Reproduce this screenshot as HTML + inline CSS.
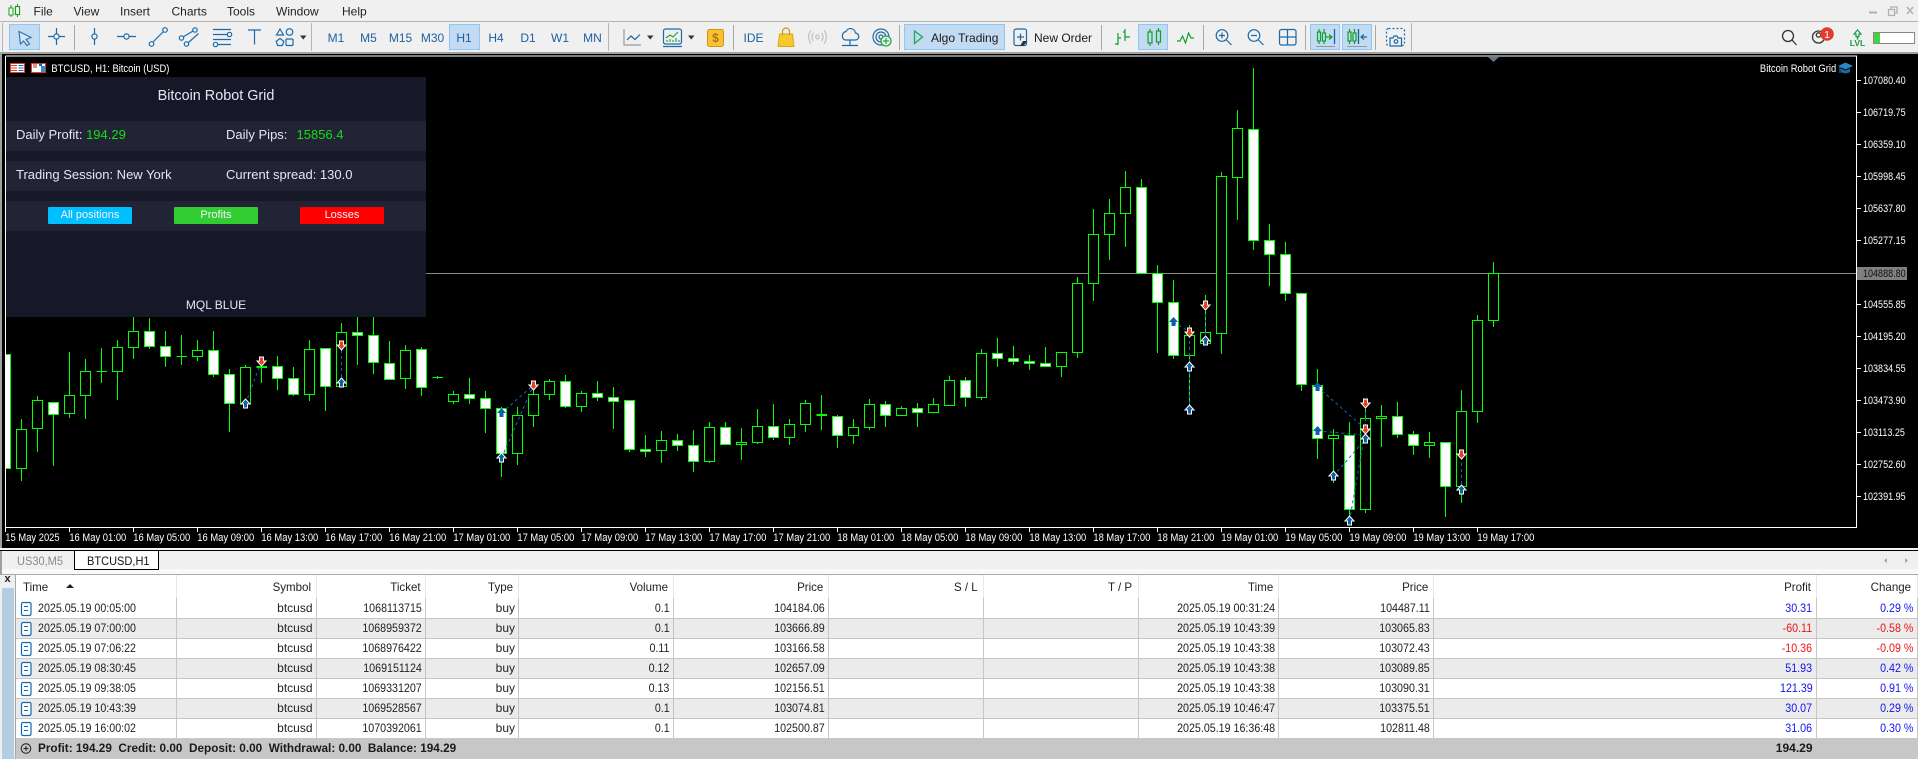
<!DOCTYPE html>
<html><head><meta charset="utf-8"><title>MT5</title>
<style>
html,body{margin:0;padding:0;background:#f0f0f0}
body{position:relative;width:1918px;height:759px;overflow:hidden;font-family:"Liberation Sans",sans-serif;color:#222}
svg{position:absolute;left:0;top:0;font-family:"Liberation Sans",sans-serif}
.abs{position:absolute}
.p{position:absolute;white-space:nowrap;color:#e4e6f4;font-size:13px;line-height:16px}
.btn{position:absolute;top:207px;width:84px;height:17px;border-radius:1px;color:#f4f4ff;font-size:11px;line-height:17px;text-align:center}
.row{position:absolute;left:16px;width:1902px;height:20px}
.row.alt{background:#ebebeb}
.row.wh{background:#fff}
.row i,.hd i{position:absolute;top:0;font-style:normal;font-size:12px;line-height:20px;white-space:nowrap;color:#222;transform:scaleX(.89);transform-origin:100% 50%}
.row i.a{left:22px;transform-origin:0 50%}
.row i.b{right:1605.5px;transform:none}
.row i.c{right:1496.5px}
.row i.d{right:1403px;transform:none}
.row i.e{right:1248.5px}
.row i.f{right:1093px}
.row i.g{right:643px}
.row i.h{right:488.5px}
.row i.j{right:105.5px}
.row i.k{right:5px}
.pos{color:#1414f0!important}
.neg{color:#f01414!important}
.hd i{transform:scaleX(.96);top:2px}
</style></head>
<body>

<!-- Chart area -->
<div class="abs" style="left:0;top:52px;width:1918px;height:3px;background:#a0a0a0"></div>
<div class="abs" style="left:2px;top:54px;width:1916px;height:494px;background:#000"></div>
<div class="abs" style="left:0;top:54px;width:2px;height:494px;background:#a0a0a0"></div>
<div class="abs" style="left:0;top:548px;width:1918px;height:2px;background:#f4f4f4"></div>
<div class="abs" style="left:0;top:550px;width:1918px;height:1px;background:#000"></div>

<svg width="1918" height="759" viewBox="0 0 1918 759">
<defs>
<path id="u" d="M0-5 4.500 0H2V4H-2V0H-4.500Z" fill="#0f5ea8" stroke="#fff"/>
<path id="v" d="M0-5 4.500 0H2V4H-2V0H-4.500Z" fill="#0f5ea8"/>
<path id="d" d="M0 5 4.500 0H2V-4H-2V0H-4.500Z" fill="#e8401c" stroke="#fff"/>
</defs>
<path d="M426 273.5H1857" stroke="#8a8a8a" fill="none"/>
<!-- wicks -->
<path fill="none" stroke="#00ff00" d="M21.5 419V481M37.5 396V452M53.5 402V466M69.5 352V418M85.5 359V419M101.5 348V383M117.5 340V400M133.5 317V359M149.5 318V349M165.5 331V367M181.5 335V365M197.5 340V361M213.5 331V377M229.5 369V432M245.5 365V404M261.5 360V383M277.5 356V390M293.5 367V396M309.5 340V401M325.5 348V411M341.5 323V387M357.5 317V365M373.5 317V374M389.5 341V379M405.5 345V389M421.5 347V396M437.5 376V379M453.5 391V404M469.5 378V404M485.5 391V433M501.5 407V477M517.5 407V465M533.5 390V427M549.5 379V400M565.5 375V408M581.5 391V412M597.5 381V401M613.5 387V429M629.5 400V452M645.5 435V457M661.5 431V463M677.5 434V451M693.5 430V472M709.5 422V463M725.5 422V445M741.5 428V460M757.5 409V444M773.5 404V440M789.5 419V445M805.5 400V432M821.5 395V430M837.5 415V448M853.5 419V444M869.5 399V430M885.5 401V427M901.5 406V416M917.5 403V427M933.5 398V413M949.5 376V405M965.5 377V407M981.5 349V400M997.5 338V367M1013.5 346V365M1029.5 355V370M1045.5 347V367M1061.5 352V377M1077.5 277V358M1093.5 209V301M1109.5 199V260M1125.5 171V247M1141.5 179V273M1157.5 265V353M1173.5 280V359M1189.5 325V413M1205.5 295V343M1221.5 172V354M1237.5 110V220M1253.5 68V250M1269.5 224V286M1285.5 242V301M1301.5 293V391M1317.5 369V459M1333.5 429V483M1349.5 422V518M1365.5 408V513M1381.5 405V447M1397.5 402V438M1413.5 431V455M1429.5 432V458M1445.5 442V517M1461.5 390V503M1477.5 315V423M1493.5 262V327"/>
<!-- doji -->
<path fill="none" stroke="#00ff00" d="M96.5 371.5H107M176.5 356.5H187M432.5 377.5H443"/>
<path fill="none" stroke="#00ff00" stroke-width="2" d="M256.5 367H267M816.5 415H827"/>
<!-- hollow bodies -->
<path fill="#000" stroke="#00ff00" d="M16.5 429.5h10v39h-10zM32.5 400.5h10v28h-10zM64.5 395.5h10v18h-10zM80.5 371.5h10v24h-10zM112.5 347.5h10v24h-10zM128.5 331.5h10v16h-10zM192.5 350.5h10v6h-10zM240.5 367.5h10v36h-10zM304.5 349.5h10v45h-10zM336.5 332.5h10v54h-10zM400.5 350.5h10v28h-10zM448.5 394.5h10v7h-10zM512.5 415.5h10v38h-10zM528.5 394.5h10v21h-10zM544.5 381.5h10v13h-10zM576.5 393.5h10v13h-10zM656.5 440.5h10v10h-10zM704.5 427.5h10v34h-10zM736.5 442.5h10v2h-10zM752.5 426.5h10v16h-10zM784.5 424.5h10v13h-10zM800.5 403.5h10v21h-10zM848.5 427.5h10v8h-10zM864.5 404.5h10v23h-10zM896.5 408.5h10v7h-10zM928.5 404.5h10v8h-10zM944.5 380.5h10v25h-10zM976.5 353.5h10v44h-10zM1056.5 352.5h10v14h-10zM1072.5 283.5h10v69h-10zM1088.5 234.5h10v49h-10zM1104.5 213.5h10v21h-10zM1120.5 187.5h10v26h-10zM1184.5 335.5h10v20h-10zM1200.5 332.5h10v11h-10zM1216.5 176.5h10v157h-10zM1232.5 128.5h10v49h-10zM1328.5 435.5h10v3h-10zM1360.5 418.5h10v91h-10zM1376.5 416.5h10v2h-10zM1424.5 442.5h10v3h-10zM1456.5 411.5h10v75h-10zM1472.5 320.5h10v91h-10zM1488.5 273.5h10v47h-10z"/>
<!-- white bodies -->
<path fill="#fff" stroke="#00ff00" d="M3 354.5H10.5V468.5H3zM48.5 402.5h10v12h-10zM144.5 331.5h10v15h-10zM160.5 346.5h10v10h-10zM208.5 350.5h10v24h-10zM224.5 374.5h10v29h-10zM272.5 366.5h10v12h-10zM288.5 378.5h10v16h-10zM320.5 348.5h10v38h-10zM352.5 332.5h10v3h-10zM368.5 335.5h10v27h-10zM384.5 363.5h10v16h-10zM416.5 349.5h10v38h-10zM464.5 394.5h10v4h-10zM480.5 398.5h10v10h-10zM496.5 408.5h10v45h-10zM560.5 381.5h10v25h-10zM592.5 393.5h10v4h-10zM608.5 397.5h10v4h-10zM624.5 400.5h10v49h-10zM640.5 449.5h10v2h-10zM672.5 440.5h10v5h-10zM688.5 445.5h10v16h-10zM720.5 427.5h10v17h-10zM768.5 426.5h10v11h-10zM832.5 416.5h10v19h-10zM880.5 404.5h10v11h-10zM912.5 408.5h10v4h-10zM960.5 380.5h10v17h-10zM992.5 353.5h10v5h-10zM1008.5 358.5h10v3h-10zM1024.5 361.5h10v2h-10zM1040.5 363.5h10v3h-10zM1136.5 187.5h10v86h-10zM1152.5 273.5h10v29h-10zM1168.5 302.5h10v53h-10zM1248.5 129.5h10v111h-10zM1264.5 240.5h10v14h-10zM1280.5 254.5h10v39h-10zM1296.5 293.5h10v91h-10zM1312.5 385.5h10v53h-10zM1344.5 435.5h10v74h-10zM1392.5 416.5h10v18h-10zM1408.5 434.5h10v11h-10zM1440.5 442.5h10v44h-10z"/>
<!-- trade lines -->
<path fill="none" stroke="#1168b4" stroke-dasharray="3 3" d="M245.5 404L261.5 361M341.5 383V345M501.5 458L533.5 385M501.5 413L533.5 385M1173.5 322L1189.5 332M1189.5 410V332M1205.5 341V305M1317.5 387L1365.5 429M1317.5 431L1365.5 435M1333.5 476L1365.5 439M1349.5 521L1365.5 429M1365.5 439V403M1461.5 490V454"/>
<!-- arrows -->
<use href="#u" x="245.5" y="404"/><use href="#d" x="261.5" y="361"/>
<use href="#u" x="341.5" y="383"/><use href="#d" x="341.5" y="345"/>
<use href="#u" x="501.5" y="458"/><use href="#v" x="501.5" y="413"/><use href="#d" x="533.5" y="385"/>
<use href="#v" x="1173.5" y="322"/><use href="#d" x="1189.5" y="332"/><use href="#u" x="1189.5" y="367"/><use href="#u" x="1189.5" y="410"/>
<use href="#d" x="1205.5" y="305"/><use href="#u" x="1205.5" y="341"/>
<use href="#v" x="1317.5" y="387"/><use href="#v" x="1317.5" y="431"/><use href="#u" x="1333.5" y="476"/><use href="#u" x="1349.5" y="521"/>
<use href="#d" x="1365.5" y="403"/><use href="#d" x="1365.5" y="429"/><use href="#u" x="1365.5" y="439"/>
<use href="#d" x="1461.5" y="454"/><use href="#u" x="1461.5" y="490"/>
<!-- frame -->
<rect x="2" y="340" width="3" height="140" fill="#000"/>
<path d="M5.5 56V527.5H1856.5V56H5.5" fill="none" stroke="#fff"/>
<path d="M1488 57h11l-5.5 5z" fill="#66758a"/>
<!-- time ticks -->
<path stroke="#fff" fill="none" d="M5.5 528V532M69.5 528V532M133.5 528V532M197.5 528V532M261.5 528V532M325.5 528V532M389.5 528V532M453.5 528V532M517.5 528V532M581.5 528V532M645.5 528V532M709.5 528V532M773.5 528V532M837.5 528V532M901.5 528V532M965.5 528V532M1029.5 528V532M1093.5 528V532M1157.5 528V532M1221.5 528V532M1285.5 528V532M1349.5 528V532M1413.5 528V532M1477.5 528V532"/>
<!-- price ticks -->
<path stroke="#fff" fill="none" d="M1857 80.5H1861M1857 112.5H1861M1857 144.5H1861M1857 176.5H1861M1857 208.5H1861M1857 240.5H1861M1857 304.5H1861M1857 336.5H1861M1857 368.5H1861M1857 400.5H1861M1857 432.5H1861M1857 464.5H1861M1857 496.5H1861"/>
<rect x="1857" y="267" width="50" height="13" fill="#808080"/>
<g font-size="11" fill="#fff" transform="scale(.82,1)">
<text x="2272" y="84">107080.40</text><text x="2272" y="116">106719.75</text><text x="2272" y="148">106359.10</text><text x="2272" y="180">105998.45</text><text x="2272" y="212">105637.80</text><text x="2272" y="244">105277.15</text>
<text x="2272" y="277" fill="#111">104888.80</text>
<text x="2272" y="308">104555.85</text><text x="2272" y="340">104195.20</text><text x="2272" y="372">103834.55</text><text x="2272" y="404">103473.90</text><text x="2272" y="436">103113.25</text><text x="2272" y="468">102752.60</text><text x="2272" y="500">102391.95</text>
</g>
<g font-size="11" fill="#fff" transform="scale(.856,1)">
<text x="6.2" y="541">15 May 2025</text><text x="81" y="541">16 May 01:00</text><text x="155.7" y="541">16 May 05:00</text><text x="230.5" y="541">16 May 09:00</text><text x="305.3" y="541">16 May 13:00</text><text x="380" y="541">16 May 17:00</text><text x="454.8" y="541">16 May 21:00</text><text x="529.6" y="541">17 May 01:00</text><text x="604.4" y="541">17 May 05:00</text><text x="679.1" y="541">17 May 09:00</text><text x="753.9" y="541">17 May 13:00</text><text x="828.7" y="541">17 May 17:00</text><text x="903.4" y="541">17 May 21:00</text><text x="978.2" y="541">18 May 01:00</text><text x="1053" y="541">18 May 05:00</text><text x="1127.8" y="541">18 May 09:00</text><text x="1202.5" y="541">18 May 13:00</text><text x="1277.3" y="541">18 May 17:00</text><text x="1352.1" y="541">18 May 21:00</text><text x="1426.8" y="541">19 May 01:00</text><text x="1501.6" y="541">19 May 05:00</text><text x="1576.4" y="541">19 May 09:00</text><text x="1651.1" y="541">19 May 13:00</text><text x="1725.9" y="541">19 May 17:00</text>
<text x="60" y="72">BTCUSD, H1:  Bitcoin (USD)</text>
<text x="2056" y="72">Bitcoin Robot Grid</text>
</g>
<!-- chart header icons -->
<rect x="10.5" y="63.5" width="14" height="9" fill="#fff" stroke="#e23b2e"/>
<path d="M11 65.5h6M11 68h6M11 70.5h6" stroke="#e23b2e"/><path d="M18.5 65.5h5M18.5 68h5M18.5 70.5h5" stroke="#1168b4"/>
<rect x="31.5" y="63.5" width="14" height="9" fill="#fff" stroke="#e23b2e"/>
<path d="M33 64h4v4h-4z" fill="#f28a80"/><path d="M39 63h3v3h-3z" fill="#1168b4"/><path d="M41 66h4v6h-4z" fill="#2f8fd4"/>
<!-- grad cap -->
<path d="M1838 66l7.5-3.5L1853 66l-7.5 3.5z" fill="#2a86c8"/><path d="M1841 68.5v3.5c3 1.8 6 1.8 9 0v-3.5l-4.500 2z" fill="#1a6aa8"/><path d="M1840 67v6" stroke="#2a86c8"/>
</svg>

<!-- Panel -->
<div class="abs" style="left:6px;top:77px;width:420px;height:240px;background:#161827"></div>
<div class="abs" style="left:6px;top:121px;width:420px;height:30px;background:#222436"></div>
<div class="abs" style="left:6px;top:161px;width:420px;height:30px;background:#222436"></div>
<div class="abs" style="left:6px;top:201px;width:420px;height:30px;background:#222436"></div>
<div class="p" style="left:6px;width:420px;top:87px;text-align:center;font-size:14.4px;line-height:18px">Bitcoin Robot Grid</div>
<div class="p" style="left:16px;top:127px">Daily Profit: <span style="color:#11e011">194.29</span></div>
<div class="p" style="left:226px;top:127px">Daily Pips:<span style="position:absolute;left:70.5px;color:#11e011">15856.4</span></div>
<div class="p" style="left:16px;top:167px">Trading Session: New York</div>
<div class="p" style="left:226px;top:167px">Current spread: 130.0</div>
<div class="btn" style="left:48px;background:#00bfff">All positions</div>
<div class="btn" style="left:174px;background:#32cd32">Profits</div>
<div class="btn" style="left:300px;background:#ff0000">Losses</div>
<div class="p" style="left:6px;width:420px;top:297px;text-align:center;font-size:12px">MQL BLUE</div>

<!-- Toolbar -->
<svg width="1918" height="54" viewBox="0 0 1918 54" style="height:54px">
<rect width="1918" height="52" fill="#f0f0f0"/>
<path d="M0 21.500H1918" stroke="#b4b4b4"/>
<!-- app icon -->
<path d="M11 5v12M17.500 4v13" stroke="#1aa01a"/><rect x="9" y="8" width="4" height="7" fill="#fff" stroke="#1aa01a"/><rect x="15.500" y="6.500" width="4" height="8" fill="#fff" stroke="#1aa01a" stroke-width="1.200"/>
<g font-size="12" fill="#222">
<text x="33.500" y="15.500">File</text><text x="73.500" y="15.500">View</text><text x="120" y="15.500">Insert</text><text x="171.500" y="15.500">Charts</text><text x="227" y="15.500">Tools</text><text x="276" y="15.500">Window</text><text x="342" y="15.500">Help</text>
</g>
<!-- window controls -->
<path d="M1869 12.500h8" stroke="#b0b0b0" stroke-width="2"/><path d="M1888.500 9.500h6v6h-6zM1891 9V7h6v6h-2" fill="none" stroke="#b0b0b0" stroke-width="1.300"/><path d="M1907 7l6 7M1913 7l-6 7" stroke="#b0b0b0" stroke-width="1.500"/>
<!-- selected -->
<g fill="#c2dbf2" stroke="#90c6f4">
<rect x="9.500" y="24.500" width="30" height="25"/><rect x="449.500" y="24.500" width="30" height="25"/><rect x="904.500" y="24.500" width="100" height="25"/><rect x="1138.500" y="24.500" width="29" height="25"/><rect x="1310.500" y="24.500" width="29" height="25"/><rect x="1342.500" y="24.500" width="29" height="25"/>
</g>
<!-- separators -->
<path stroke="#a8a8a8" d="M74.500 25V50M733.500 25V50M899.500 25V50M1101.500 25V50M1203.500 25V50M1305.500 25V50M1375.500 25V50"/>
<path stroke="#b4b4b4" d="M2.500 23V51M311.500 23V51M608.500 23V51M1411.500 23V51"/>
<g fill="none" stroke="#1c6aa8" stroke-width="1.200">
<!-- cursor -->
<path d="M19 31.500L31 37.500 26 39.500 29.500 44 27 45.500 23.500 41 20.500 44z" stroke="#2a7ab8" fill="#d8e8f6"/>
<!-- cross -->
<path d="M48 36.500h17M56.500 28v17"/><circle cx="56.500" cy="36.500" r="2.600" fill="#f0f0f0"/>
<!-- vline -->
<path d="M94.500 28v17"/><circle cx="94.500" cy="36.500" r="2.600" fill="#f0f0f0"/>
<!-- hline -->
<path d="M117 36.500h19"/><circle cx="126.500" cy="36.500" r="2.600" fill="#f0f0f0"/>
<!-- trend -->
<path d="M153 42L163.500 31.500"/><circle cx="151.500" cy="44" r="2.300"/><circle cx="165" cy="30" r="2.300"/>
<!-- channel -->
<path d="M183 37L193 31M188.500 42.500L198.500 33.500"/><circle cx="181.500" cy="38" r="2.200"/><circle cx="195" cy="30" r="2.200"/><circle cx="186.500" cy="44" r="2.200"/>
<!-- fib -->
<path d="M213 29.500h18M213 34.500h14M213 39.500h18M218 44.500h13"/><circle cx="229.500" cy="34.500" r="2.200"/><circle cx="215.500" cy="44.500" r="2.200"/>
<!-- T -->
<path d="M248 30h13M254.500 30v14.500"/>
<!-- shapes -->
<path d="M280 29l3.500 6h-7z"/><circle cx="289.500" cy="32" r="3.300"/><path d="M280 38.500l3.800 2.800-1.400 4.200h-4.800l-1.400-4.200z"/><rect x="286" y="39" width="7" height="6.500" rx="1"/>
<!-- line chart -->
<path d="M624 29v16h17" stroke="#9a9a9a"/><path d="M627 40l4-4 4 3.500 5-5"/>
<!-- template -->
<rect x="663.500" y="29" width="18" height="15" rx="2"/><path d="M663 46.500h19"/><path d="M666 38l4-3 3 2 5-5" stroke="#27a640"/><path d="M667 42v-2M670 42v-3M673 42v-2M676 42v-4M679 42v-2" stroke="#27a640"/>
<!-- cloud -->
<path d="M845 40h10a3.500 3.500 0 0 0 .5-7 5 5 0 0 0-9.500-1.500A4.500 4.500 0 0 0 845 40zM850 40v5M842 45.500h16"/>
<!-- vps -->
<circle cx="881" cy="37" r="8"/><circle cx="881" cy="37" r="5"/><circle cx="881" cy="37" r="2"/>
<!-- new order -->
<rect x="1014" y="29" width="12.500" height="16.500" rx="2"/><path d="M1020.500 33.500v7M1017 37h7"/>
<!-- zoom -->
<circle cx="1222" cy="35.500" r="5.800"/><path d="M1226.500 40l5 5M1219 35.500h6M1222 32.500v6"/>
<circle cx="1254" cy="35.500" r="5.800"/><path d="M1258.500 40l5 5M1251 35.500h6"/>
<!-- grid -->
<rect x="1279.500" y="29.500" width="16.500" height="15.500" rx="2"/><path d="M1287.500 29.500v15.500M1279.500 37h16.500"/>
<!-- screenshot -->
<rect x="1386.500" y="28.500" width="18" height="17" rx="2" stroke-dasharray="2 2"/><path d="M1390 46v-8h3l1-2h3l1 2h3.500v8z" fill="#f0f0f0"/><circle cx="1396" cy="41.500" r="1.800"/>
</g>
<!-- vps plus -->
<circle cx="886" cy="41" r="5" fill="#f0f0f0" stroke="#27a640" stroke-width="1.300"/><path d="M886 38v6M883 41h6" stroke="#27a640" stroke-width="1.200"/>
<path d="M1020 46h3l3.500-3.500V41h-3.500z" fill="#333"/>
<!-- dropdowns -->
<path d="M300 35.500h6.500l-3.250 4zM647 35.500h6.500l-3.250 4zM688 35.500h6.500l-3.250 4z" fill="#333"/>
<!-- timeframes -->
<g font-size="12" fill="#1c5f9f" text-anchor="middle">
<text x="336" y="42">M1</text><text x="368.500" y="42">M5</text><text x="400.500" y="42">M15</text><text x="432.500" y="42">M30</text><text x="464" y="42">H1</text><text x="496" y="42">H4</text><text x="528" y="42">D1</text><text x="560" y="42">W1</text><text x="592.500" y="42">MN</text><text x="753.500" y="42">IDE</text>
</g>
<!-- dollar -->
<rect x="707.500" y="29.500" width="16" height="17" rx="2" fill="#fbc22e" stroke="#c8961e"/><text x="715.500" y="42" font-size="12" font-weight="bold" text-anchor="middle" fill="#a8761a">$</text>
<!-- bag -->
<path d="M779.500 34h13l1.500 12.500h-16z" fill="#f8c92c" stroke="#d8a820"/><path d="M782.500 35v-3.500a3.500 3.500 0 0 1 7 0V35" fill="none" stroke="#c89620" stroke-width="1.200"/>
<!-- signal -->
<g fill="none" stroke="#c0c0c0" stroke-width="1.200"><circle cx="817.500" cy="37" r="1.800"/><path d="M813.500 33a6 6 0 0 0 0 8M821.500 33a6 6 0 0 1 0 8M811 30.500a10 10 0 0 0 0 13M824 30.500a10 10 0 0 1 0 13"/></g>
<!-- algo -->
<path d="M914.500 31l8 6-8 6.500z" fill="none" stroke="#1fa85a" stroke-width="1.300"/>
<text x="931" y="42" font-size="12" fill="#1a1a1a">Algo Trading</text>
<text x="1034" y="42" font-size="12" fill="#1a1a1a">New Order</text>
<!-- bars / candles / line -->
<g fill="none" stroke="#0ea02a" stroke-width="1.200">
<path d="M1115 44h3M1118 33v12M1118 38h3M1125 29v12M1125 32h-2M1125 37h5"/>
<rect x="1148" y="32" width="4" height="11"/><path d="M1150 29v3M1150 43v3"/><rect x="1156.500" y="31" width="4" height="11"/><path d="M1158.500 28v3M1158.500 42v3"/>
<path d="M1177 41h3l2.500-5 3 7 3-10 2.500 5h3"/>
<path d="M1319 29v15M1324 29v15"/><rect x="1317.500" y="32" width="3" height="9" fill="#c2dbf2"/><rect x="1322.500" y="33" width="3" height="8" fill="#c2dbf2"/><path d="M1326 37h6M1329 34.500l3 2.500-3 2.500"/>
<path d="M1349.500 29v15M1354.500 29v15"/><rect x="1348" y="32" width="3" height="9" fill="#c2dbf2"/><rect x="1353" y="33" width="3" height="8" fill="#c2dbf2"/>
</g>
<path d="M1334.500 29v15M1358.500 29v15" stroke="#1c5f9f" stroke-width="1.300"/><path d="M1367 37h-6M1364 34.500l-3 2.500 3 2.500" fill="none" stroke="#1c6aa8" stroke-width="1.200"/>
<path d="M1316 46.500h19M1347 46.500h20" stroke="#8e9aa6"/>
<!-- right side -->
<g fill="none" stroke="#333" stroke-width="1.300"><circle cx="1788" cy="36" r="5.500"/><path d="M1792 40l4.500 5"/>
<circle cx="1818.500" cy="37" r="6"/><circle cx="1818.500" cy="35" r="2.200"/></g>
<circle cx="1827" cy="34" r="6.800" fill="#e23c2c"/><text x="1827" y="38" font-size="10.500" fill="#fff" text-anchor="middle">1</text>
<path d="M1857.500 30l3.500 4h-2v2.500h-3V34h-2z" fill="none" stroke="#16a03a" stroke-width="1.200"/><path d="M1857.500 37v2.500" stroke="#16a03a" stroke-width="1.500"/>
<text x="1857.500" y="46" font-size="8.500" font-weight="bold" fill="#16a03a" text-anchor="middle">LVL</text>
<rect x="1873.500" y="32.500" width="41" height="11" fill="#fff" stroke="#888"/><rect x="1874" y="33" width="6" height="10" fill="#3fd63f"/>
</svg>

<!-- Terminal -->
<div class="abs" style="left:2px;top:551px;width:1916px;height:18px;background:#f0f0f0"></div>
<div class="abs" style="left:0;top:569px;width:1918px;height:5px;background:#f9f9f9"></div>
<div class="abs" style="left:0;top:574px;width:1918px;height:1px;background:#aaa"></div>
<div class="abs" style="left:0;top:551px;width:2px;height:24px;background:#a0a0a0"></div>
<div class="abs" style="left:74px;top:550px;width:83px;height:18px;background:#fff;border:1px solid #000;border-top:1px solid #000"></div>
<div class="abs" style="left:17px;top:553px;font-size:12px;line-height:16px;color:#8a8a8a;transform:scaleX(.92);transform-origin:0 50%">US30,M5</div>
<div class="abs" style="left:87px;top:553px;font-size:12px;line-height:16px;color:#111;transform:scaleX(.92);transform-origin:0 50%">BTCUSD,H1</div>
<svg width="1918" height="759" viewBox="0 0 1918 759" style="pointer-events:none"><path d="M1887 558v5l-3-2.500zM1905 558v5l3-2.500z" fill="#aaa"/></svg>

<div class="abs" style="left:0;top:575px;width:16px;height:184px;background:#f0f0f0"></div>
<div class="abs" style="left:2px;top:588px;width:12px;height:171px;background:#b5cde3"></div>
<div class="abs" style="left:3px;top:573px;width:9px;font-size:11px;font-weight:bold;line-height:13px;text-align:center;color:#222">x</div>
<div class="abs" style="left:15px;top:575px;width:1px;height:184px;background:#a8a8a8"></div>

<!-- header -->
<div class="row wh hd" style="top:575px;height:23px">
<i style="left:7px;transform-origin:0 50%">Time</i>
<i style="right:1607px">Symbol</i><i style="right:1497.500px">Ticket</i><i style="right:1405px">Type</i><i style="right:1249.500px">Volume</i><i style="right:1095px">Price</i>
<i style="right:940px">S / L</i><i style="right:785.500px">T / P</i>
<i style="right:645px">Time</i><i style="right:490px">Price</i><i style="right:107px">Profit</i><i style="right:7px">Change</i>
</div>

<!-- rows -->
<div class="row wh" style="top:598px"><i class="a">2025.05.19 00:05:00</i><i class="b">btcusd</i><i class="c">1068113715</i><i class="d">buy</i><i class="e">0.1</i><i class="f">104184.06</i><i class="g">2025.05.19 00:31:24</i><i class="h">104487.11</i><i class="j pos">30.31</i><i class="k pos">0.29 %</i></div>
<div class="row alt" style="top:618px"><i class="a">2025.05.19 07:00:00</i><i class="b">btcusd</i><i class="c">1068959372</i><i class="d">buy</i><i class="e">0.1</i><i class="f">103666.89</i><i class="g">2025.05.19 10:43:39</i><i class="h">103065.83</i><i class="j neg">-60.11</i><i class="k neg">-0.58 %</i></div>
<div class="row wh" style="top:638px"><i class="a">2025.05.19 07:06:22</i><i class="b">btcusd</i><i class="c">1068976422</i><i class="d">buy</i><i class="e">0.11</i><i class="f">103166.58</i><i class="g">2025.05.19 10:43:38</i><i class="h">103072.43</i><i class="j neg">-10.36</i><i class="k neg">-0.09 %</i></div>
<div class="row alt" style="top:658px"><i class="a">2025.05.19 08:30:45</i><i class="b">btcusd</i><i class="c">1069151124</i><i class="d">buy</i><i class="e">0.12</i><i class="f">102657.09</i><i class="g">2025.05.19 10:43:38</i><i class="h">103089.85</i><i class="j pos">51.93</i><i class="k pos">0.42 %</i></div>
<div class="row wh" style="top:678px"><i class="a">2025.05.19 09:38:05</i><i class="b">btcusd</i><i class="c">1069331207</i><i class="d">buy</i><i class="e">0.13</i><i class="f">102156.51</i><i class="g">2025.05.19 10:43:38</i><i class="h">103090.31</i><i class="j pos">121.39</i><i class="k pos">0.91 %</i></div>
<div class="row alt" style="top:698px"><i class="a">2025.05.19 10:43:39</i><i class="b">btcusd</i><i class="c">1069528567</i><i class="d">buy</i><i class="e">0.1</i><i class="f">103074.81</i><i class="g">2025.05.19 10:46:47</i><i class="h">103375.51</i><i class="j pos">30.07</i><i class="k pos">0.29 %</i></div>
<div class="row wh" style="top:718px"><i class="a">2025.05.19 16:00:02</i><i class="b">btcusd</i><i class="c">1070392061</i><i class="d">buy</i><i class="e">0.1</i><i class="f">102500.87</i><i class="g">2025.05.19 16:36:48</i><i class="h">102811.48</i><i class="j pos">31.06</i><i class="k pos">0.30 %</i></div>

<svg width="1918" height="759" viewBox="0 0 1918 759" style="pointer-events:none">
<path stroke="#e8e8e8" fill="none" d="M176.500 575V598M316.500 575V598M425.500 575V598M518.500 575V598M673.500 575V598M828.500 575V598M983.500 575V598M1138.500 575V598M1278.500 575V598M1433.500 575V598M1816.500 575V598M1917.500 575V598"/>
<path stroke="#c6c6c6" fill="none" d="M176.500 598V738M316.500 598V738M425.500 598V738M518.500 598V738M673.500 598V738M828.500 598V738M983.500 598V738M1138.500 598V738M1278.500 598V738M1433.500 598V738M1816.500 598V738M1917.500 598V738M16 618.500H1918M16 638.500H1918M16 658.500H1918M16 678.500H1918M16 698.500H1918M16 718.500H1918"/>
<path d="M66 588h8l-4-4z" fill="#222"/>
<g fill="#fff" stroke="#1168b4" stroke-width="1.200">
<rect x="21.500" y="602.500" width="9.500" height="13" rx="1.500"/><rect x="21.500" y="622.500" width="9.500" height="13" rx="1.500"/><rect x="21.500" y="642.500" width="9.500" height="13" rx="1.500"/><rect x="21.500" y="662.500" width="9.500" height="13" rx="1.500"/><rect x="21.500" y="682.500" width="9.500" height="13" rx="1.500"/><rect x="21.500" y="702.500" width="9.500" height="13" rx="1.500"/><rect x="21.500" y="722.500" width="9.500" height="13" rx="1.500"/>
</g>
<path stroke="#1168b4" d="M24 606.500h4M24 610.500h4M24 626.500h4M24 630.500h4M24 646.500h4M24 650.500h4M24 666.500h4M24 670.500h4M24 686.500h4M24 690.500h4M24 706.500h4M24 710.500h4M24 726.500h4M24 730.500h4"/>
</svg>

<!-- footer -->
<div class="abs" style="left:16px;top:738px;width:1902px;height:21px;background:#c7c7c7"></div>
<svg width="1918" height="759" viewBox="0 0 1918 759" style="pointer-events:none"><circle cx="26" cy="748.500" r="4.800" fill="none" stroke="#222"/><path d="M23.500 748.500h5M26 746v5" stroke="#222"/></svg>
<div class="abs" style="left:38px;top:740px;font-size:12px;font-weight:bold;line-height:17px;white-space:pre;color:#1a1a1a;transform:scaleX(.98);transform-origin:0 50%">Profit: 194.29  Credit: 0.00  Deposit: 0.00  Withdrawal: 0.00  Balance: 194.29</div>
<div class="abs" style="right:105.500px;top:740px;font-size:12px;font-weight:bold;line-height:17px;color:#1a1a1a">194.29</div>
</body></html>
